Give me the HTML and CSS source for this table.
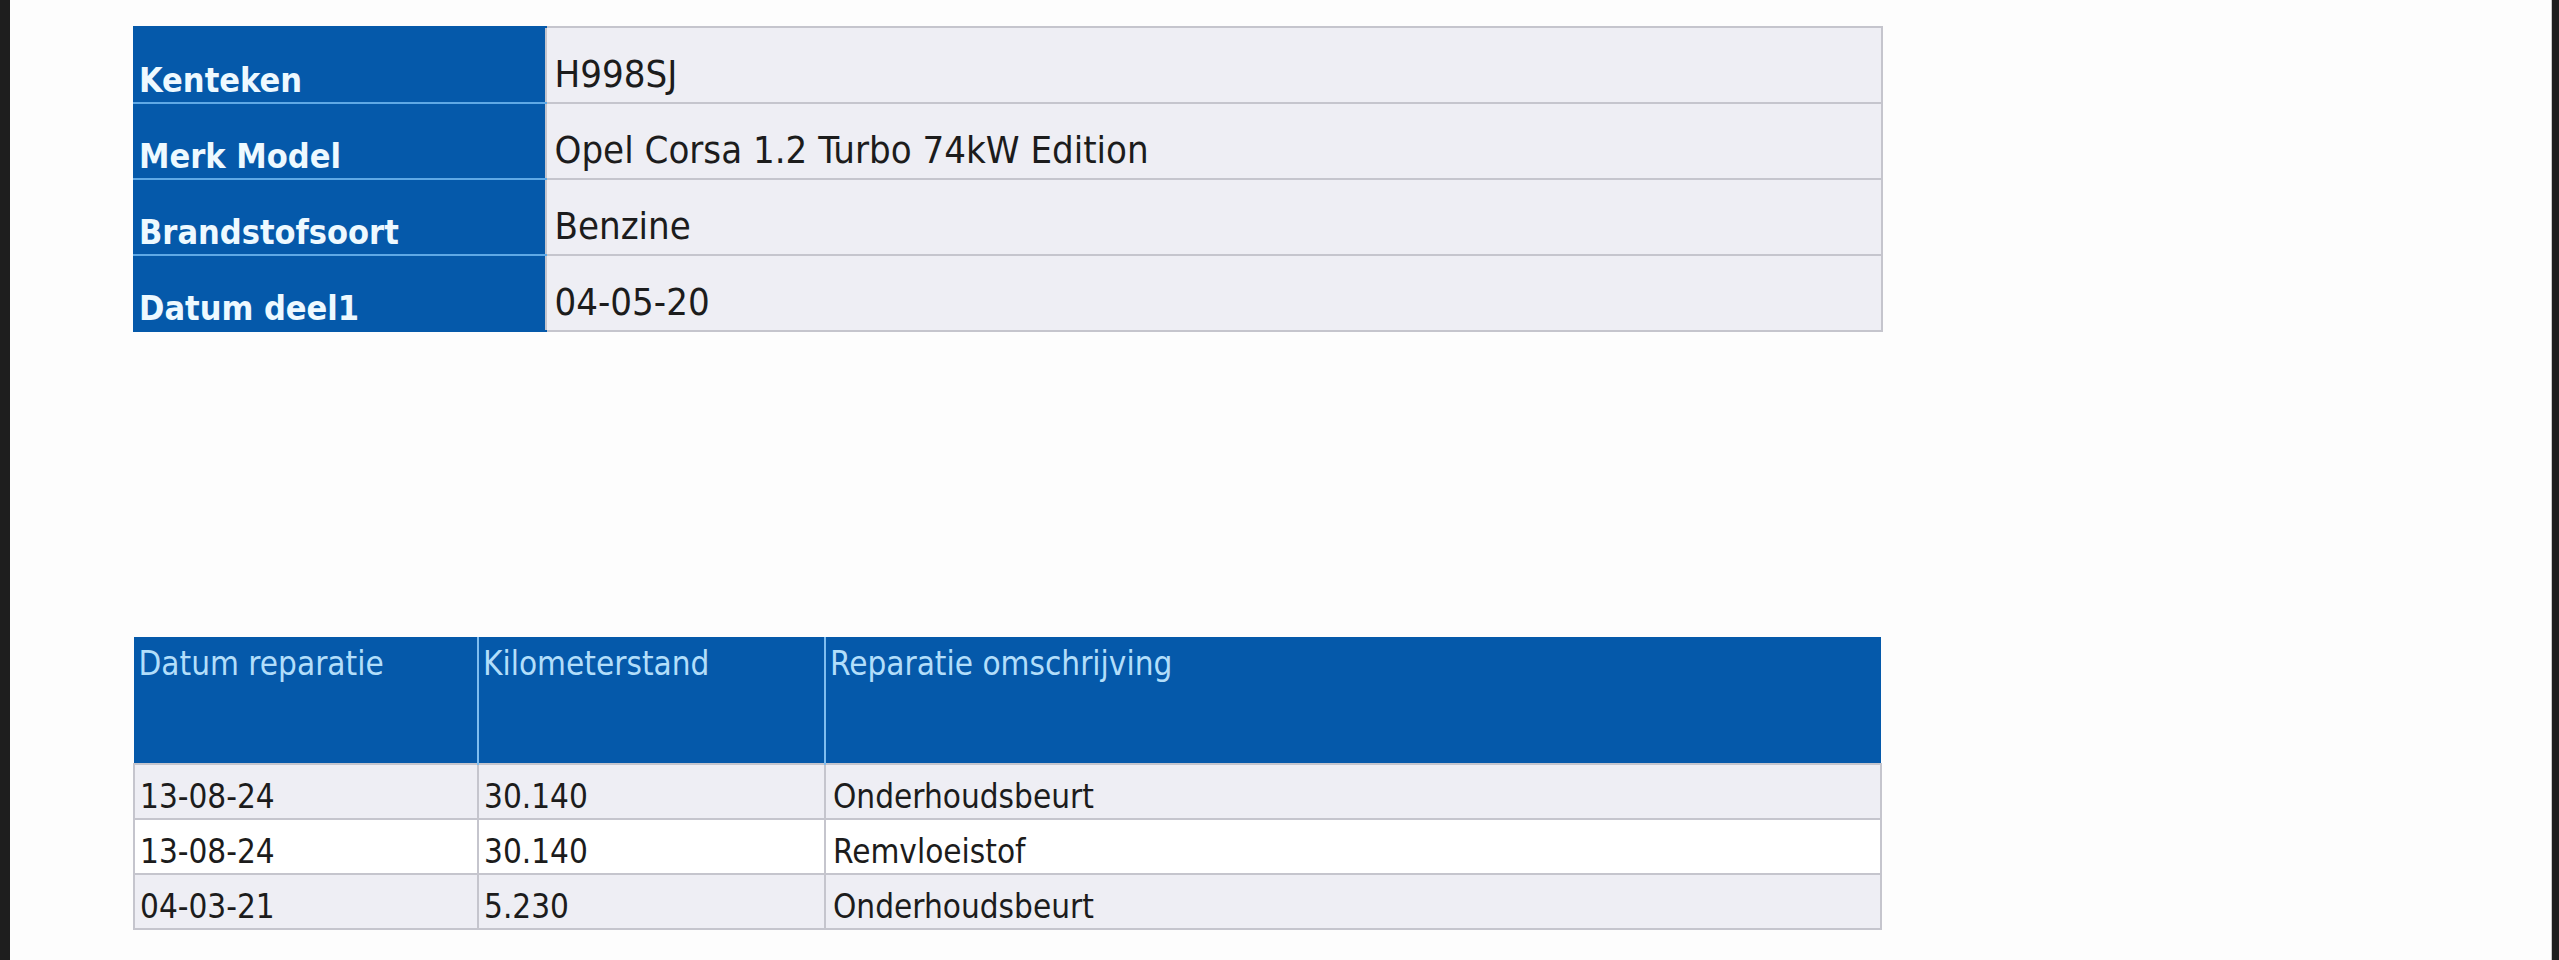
FILE: index.html
```html
<!DOCTYPE html>
<html lang="nl">
<head>
<meta charset="utf-8">
<title>Voertuig reparaties</title>
<link rel="stylesheet" href="styles.css">
</head>
<body>
<div class="page">
  <table class="info">
    <colgroup><col class="info-label-col"><col></colgroup>
    <tr><th>Kenteken</th><td>H998SJ</td></tr>
    <tr><th>Merk Model</th><td>Opel Corsa 1.2 Turbo 74kW Edition</td></tr>
    <tr><th>Brandstofsoort</th><td>Benzine</td></tr>
    <tr><th>Datum deel1</th><td>04-05-20</td></tr>
  </table>

  <table class="repairs">
    <colgroup><col class="c-date"><col class="c-km"><col></colgroup>
    <thead>
      <tr><th>Datum reparatie</th><th>Kilometerstand</th><th>Reparatie omschrijving</th></tr>
    </thead>
    <tbody>
      <tr class="alt"><td>13-08-24</td><td>30.140</td><td>Onderhoudsbeurt</td></tr>
      <tr><td>13-08-24</td><td>30.140</td><td>Remvloeistof</td></tr>
      <tr class="alt"><td>04-03-21</td><td>5.230</td><td>Onderhoudsbeurt</td></tr>
    </tbody>
  </table>
</div>
</body>
</html>
```
FILE: styles.css
```css
html, body {
  margin: 0;
  padding: 0;
  background: #1e1e1e;
}

body {
  font-family: "DejaVu Sans Condensed", "DejaVu Sans", sans-serif;
  font-stretch: condensed;
  color: #1c1c1c;
}

.page {
  margin: 0 7px 0 10px;
  height: 960px;
  background: #fdfdfd;
  padding: 26px 0 0 123px;
  box-sizing: border-box;
  border-right: 1px solid #c8c8c8;
}

table {
  border-collapse: collapse;
  table-layout: fixed;
}

/* ---- vehicle info table ---- */
.info {
  width: 1750px;
}

.info-label-col {
  width: 412px;
}

.info tr {
  height: 76px;
}

.info th {
  background: #0559aa;
  color: #eef9ff;
  font-weight: bold;
  font-size: 34px;
  text-align: left;
  vertical-align: bottom;
  padding: 0 4px 2px 5px;
  border-top: 2px solid #5fa9e6;
  border-bottom: 2px solid #5fa9e6;
  border-left: 1px solid #0559aa;
  line-height: 1.15;
  white-space: nowrap;
}

.info tr:first-child th {
  border-top: 2px solid #0559aa;
}

.info tr:last-child th {
  border-bottom: 2px solid #0559aa;
}

.info td {
  background: #eeeef4;
  font-size: 38px;
  vertical-align: bottom;
  padding: 0 10px 5px 8px;
  border: 2px solid #c5c5cd;
  line-height: 1.15;
  white-space: nowrap;
}

/* ---- repairs table ---- */
.repairs {
  width: 1749px;
  margin-top: 305px;
}

.c-date {
  width: 344px;
}

.c-km {
  width: 347px;
}

.repairs thead tr {
  height: 127px;
}

.repairs thead th {
  background: #0559aa;
  color: #b2defa;
  font-weight: normal;
  font-size: 33px;
  text-align: left;
  vertical-align: top;
  padding: 8px 6px 0 4px;
  border-left: 2px solid #7fbdef;
  line-height: 1.15;
  white-space: nowrap;
}

.repairs thead th:first-child {
  border-left: 1px solid #0559aa;
}

.repairs tbody tr {
  height: 55px;
  background: #ffffff;
}

.repairs tbody tr.alt {
  background: #eeeef4;
}

.repairs td {
  font-size: 33px;
  vertical-align: bottom;
  padding: 0 6px 2px 5px;
  border: 2px solid #c5c5cd;
  line-height: 1.15;
  white-space: nowrap;
}

.repairs td:nth-child(3) {
  padding-left: 7px;
}
```
